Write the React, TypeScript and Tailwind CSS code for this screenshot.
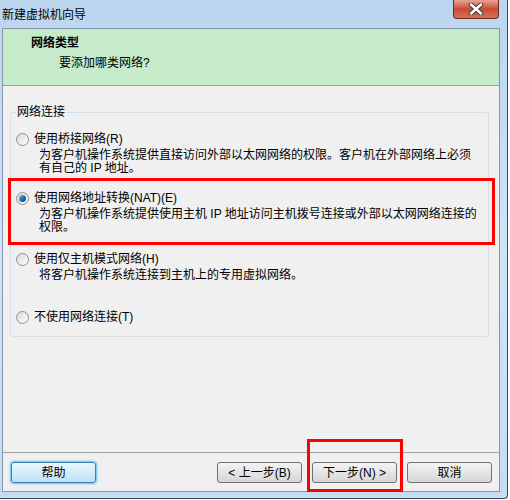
import React from "react";

const font = {
  fontFamily: '"Liberation Sans", "Noto Sans CJK SC", sans-serif',
};

const Radio = ({ checked }: { checked?: boolean }) => (
  <span className="flex h-[13px] w-[13px] shrink-0 items-center justify-center rounded-full border border-[#8f8f8f] bg-gradient-to-br from-[#d9d9d9] to-[#fdfdfd]">
    {checked && (
      <span className="h-[7px] w-[7px] rounded-full bg-gradient-to-br from-[#80b6e6] via-[#2b6fb6] to-[#0c3c7a]" />
    )}
  </span>
);

interface OptionProps {
  label: string;
  lines?: string[];
  checked?: boolean;
  className?: string;
}

const Option: React.FC<OptionProps> = ({ label, lines, checked, className }) => (
  <div className={className}>
    <div className="flex h-[16px] items-center gap-[5px]">
      <Radio checked={checked} />
      <span className="leading-[16px]">{label}</span>
    </div>
    {lines && (
      <div className="mt-[2px] pl-[23px] leading-[13px]">
        {lines.map((l) => (
          <div key={l} className="whitespace-nowrap">
            {l}
          </div>
        ))}
      </div>
    )}
  </div>
);

const Button = ({ children, focused }: { children: React.ReactNode; focused?: boolean }) => (
  <button
    className={
      focused
        ? "flex h-[21px] w-[85px] items-center justify-center rounded-[3px] border border-[#3c7fb1] bg-gradient-to-b from-[#e9f6fd] to-[#bfe2f5] text-[12px] text-black shadow-[0_0_2px_1px_#5bc3ee]"
        : "flex h-[21px] w-[85px] items-center justify-center rounded-[3px] border border-[#707070] bg-gradient-to-b from-[#f4f4f4] to-[#d6d6d6] text-[12px] text-black"
    }
  >
    {children}
  </button>
);

export default function App() {
  return (
    <div className="relative h-[500px] w-[510px] bg-white text-[12px] text-black" style={font}>
      <div className="flex h-[499px] w-[508px] flex-col rounded-br-[4px] border-r border-b border-[#3b4a5c] bg-gradient-to-b from-[#bcd5ef] via-[#d0e3f7] to-[#c6dcf3]">
        {/* title bar */}
        <div className="relative flex h-[28px] items-center pl-[2px]">
          <span className="pt-[1px] leading-none">新建虚拟机向导</span>
          <div className="absolute top-0 left-[453px] flex h-[19px] w-[46px] items-center justify-center rounded-b-[4px] border border-t-0 border-[#6d2a22] bg-gradient-to-b from-[#e8a393] via-[#c94a35] to-[#d9705a]">
            <svg width="16" height="12" viewBox="0 0 16 12">
              <path d="M3 1.5 L13 10.5 M13 1.5 L3 10.5" stroke="#3a3a3a" strokeWidth="4.5" strokeLinecap="round" />
              <path d="M3 1.5 L13 10.5 M13 1.5 L3 10.5" stroke="#ffffff" strokeWidth="2.5" strokeLinecap="round" />
            </svg>
          </div>
        </div>

        {/* content */}
        <div className="ml-[2px] flex w-[498px] flex-col border border-[#8796ab] bg-[#f0f0f0]">
          <div className="h-[57px] border-b border-[#a0a0a0] bg-[#c6ebcb] pt-[6px]">
            <div className="pl-[28px] leading-[16px] font-bold">网络类型</div>
            <div className="mt-[4px] pl-[56px] leading-[16px]">要添加哪类网络?</div>
          </div>

          <div className="h-[366px] pt-[18px] pl-[7px]">
            <fieldset className="w-[479px] rounded-[3px] border border-[#d5dfe5] px-[5px] pb-[11px]">
              <legend className="px-[1px] leading-[16px]">网络连接</legend>
              <Option
                className="mt-[11px]"
                label="使用桥接网络(R)"
                lines={[
                  "为客户机操作系统提供直接访问外部以太网网络的权限。客户机在外部网络上必须",
                  "有自己的 IP 地址。",
                ]}
              />
              <Option
                className="mt-[15px]"
                checked
                label="使用网络地址转换(NAT)(E)"
                lines={[
                  "为客户机操作系统提供使用主机 IP 地址访问主机拨号连接或外部以太网网络连接的",
                  "权限。",
                ]}
              />
              <Option
                className="mt-[17px]"
                label="使用仅主机模式网络(H)"
                lines={["将客户机操作系统连接到主机上的专用虚拟网络。"]}
              />
              <Option className="mt-[27px]" label="不使用网络连接(T)" />
            </fieldset>
          </div>

          <div className="flex h-[39px] items-start border-t border-[#a0a0a0] pt-[9px] pl-[8px]">
            <Button focused>帮助</Button>
            <div className="ml-auto flex gap-[10px] pr-[7px]">
              <Button>&lt; 上一步(B)</Button>
              <Button>下一步(N) &gt;</Button>
              <Button>取消</Button>
            </div>
          </div>
        </div>
      </div>

      {/* red annotations */}
      <div className="pointer-events-none absolute top-[178px] left-[8px] h-[67px] w-[487px] border-[3px] border-[#ff0000]" />
      <div className="pointer-events-none absolute top-[439px] left-[307px] h-[53px] w-[96px] border-[3px] border-[#ff0000]" />
    </div>
  );
}
